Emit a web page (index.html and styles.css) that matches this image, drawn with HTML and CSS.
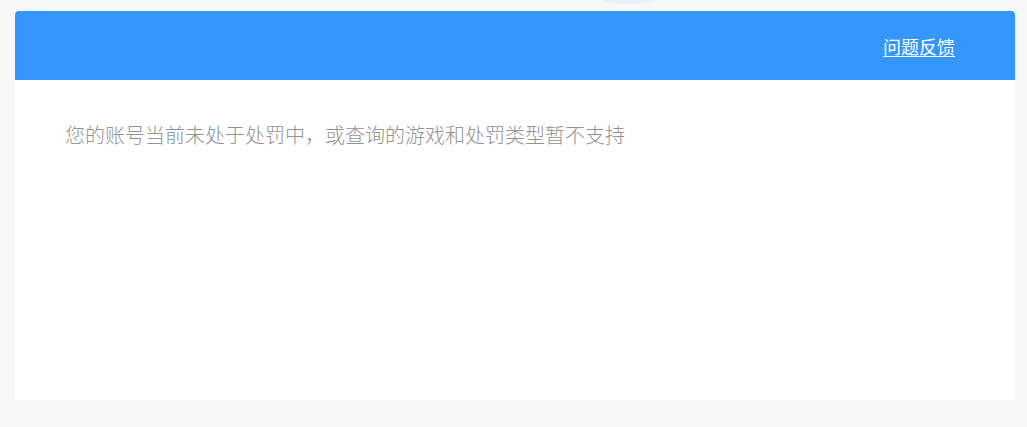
FILE: index.html
```html
<!DOCTYPE html>
<html lang="zh-CN">
<head>
<meta charset="utf-8">
<title>处罚查询</title>
<link rel="stylesheet" href="styles.css">
</head>
<body>
<div class="glow"></div>
<div class="card">
  <div class="card-header">
    <a class="feedback" href="#">问题反馈</a>
  </div>
  <div class="card-body">
    <p class="notice">您的账号当前未处于处罚中，或查询的游戏和处罚类型暂不支持</p>
  </div>
</div>
</body>
</html>
```
FILE: styles.css
```css
html, body {
  margin: 0;
  padding: 0;
  background: #f7f7f7;
  font-family: "Microsoft YaHei", "Noto Sans CJK SC", "Noto Sans", sans-serif;
}
body {
  padding: 11px 12px 0 15px;
  height: 427px;
  box-sizing: border-box;
  overflow: hidden;
}
.glow {
  position: absolute;
  left: 600px;
  top: -8px;
  width: 60px;
  height: 12px;
  border-radius: 50%;
  background: #e8f0fa;
}
.card {
  width: 1000px;
  background: #ffffff;
  border-radius: 4px 4px 0 0;
  overflow: hidden;
  position: relative;
}
.card-header {
  height: 69px;
  background: #3596fe;
  display: flex;
  align-items: center;
  justify-content: flex-end;
  padding-right: 60px;
}
.feedback {
  color: #ffffff;
  font-size: 18px;
  font-weight: 400;
  text-decoration: underline;
  text-underline-offset: 2px;
  margin-top: 1px;
}
.card-body {
  height: 320px;
  padding: 40px 50px 0;
  box-sizing: border-box;
}
.notice {
  margin: 0;
  font-size: 20px;
  font-weight: 300;
  line-height: 30px;
  color: #939393;
}
```
